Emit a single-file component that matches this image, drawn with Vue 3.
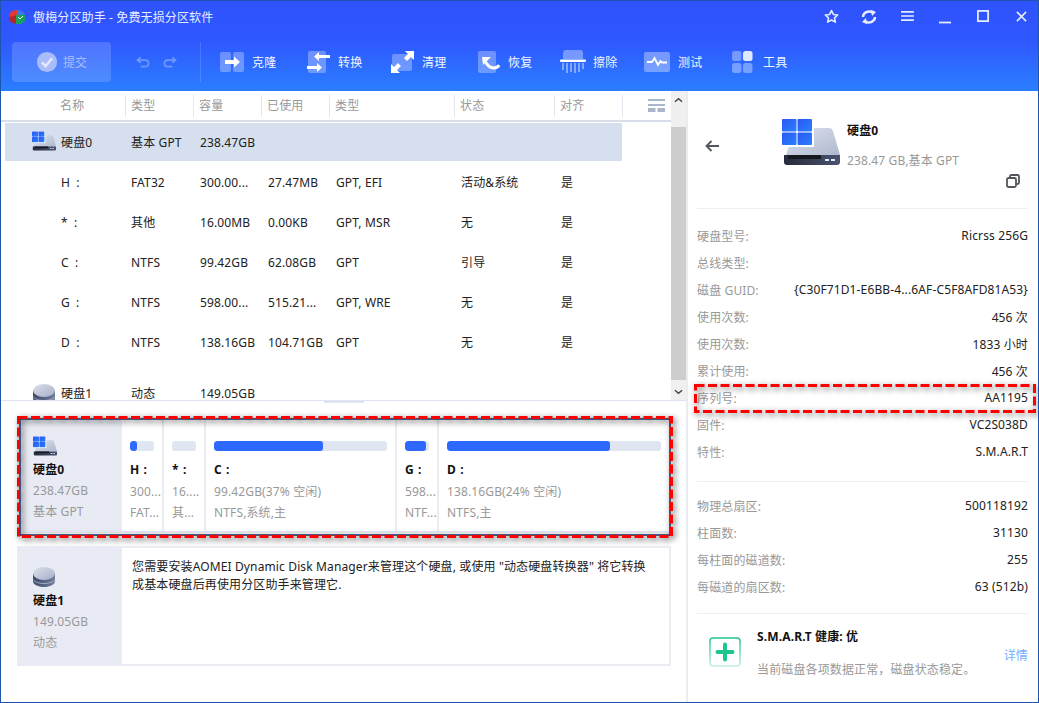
<script setup>
const tools = [
  { key: 'clone', label: '克隆' },
  { key: 'convert', label: '转换' },
  { key: 'clean', label: '清理' },
  { key: 'restore', label: '恢复' },
  { key: 'wipe', label: '擦除' },
  { key: 'test', label: '测试' },
  { key: 'tools', label: '工具' },
]

const columns = ['名称', '类型', '容量', '已使用', '类型', '状态', '对齐']

const partitions = [
  ['H :', 'FAT32', '300.00...', '27.47MB', 'GPT, EFI', '活动&系统', '是'],
  ['* :', '其他', '16.00MB', '0.00KB', 'GPT, MSR', '无', '是'],
  ['C :', 'NTFS', '99.42GB', '62.08GB', 'GPT', '引导', '是'],
  ['G :', 'NTFS', '598.00...', '515.21...', 'GPT, WRE', '无', '是'],
  ['D :', 'NTFS', '138.16GB', '104.71GB', 'GPT', '无', '是'],
]

const cells = [
  { name: 'H :', used: 30, size: '300...', info: 'FAT...' },
  { name: '* :', used: 0, size: '16....', info: '其...' },
  { name: 'C :', used: 63, size: '99.42GB(37% 空闲)', info: 'NTFS,系统,主' },
  { name: 'G :', used: 86, size: '598...', info: 'NTF...' },
  { name: 'D :', used: 76, size: '138.16GB(24% 空闲)', info: 'NTFS,主' },
]

const diskInfo = [
  ['硬盘型号:', 'Ricrss 256G'],
  ['总线类型:', ''],
  ['磁盘 GUID:', '{C30F71D1-E6BB-4...6AF-C5F8AFD81A53}'],
  ['使用次数:', '456 次'],
  ['使用次数:', '1833 小时'],
  ['累计使用:', '456 次'],
  ['序列号:', 'AA1195'],
  ['固件:', 'VC2S038D'],
  ['特性:', 'S.M.A.R.T'],
]

const geometry = [
  ['物理总扇区:', '500118192'],
  ['柱面数:', '31130'],
  ['每柱面的磁道数:', '255'],
  ['每磁道的扇区数:', '63 (512b)'],
]
</script>

<template>
  <div class="window">
    <svg class="defs" width="0" height="0" aria-hidden="true">
      <defs>
        <linearGradient id="paneBlue" x1="0" y1="0" x2="1" y2="1">
          <stop offset="0" stop-color="#2a58f2" />
          <stop offset="1" stop-color="#2b80ff" />
        </linearGradient>
        <linearGradient id="bodyGrey" x1="0" y1="0" x2="1" y2="1">
          <stop offset="0" stop-color="#dfe3ee" />
          <stop offset="1" stop-color="#aeb8ce" />
        </linearGradient>
        <linearGradient id="baseDark" x1="0" y1="0" x2="1" y2="0">
          <stop offset="0" stop-color="#262b3a" />
          <stop offset="1" stop-color="#4a5270" />
        </linearGradient>
        <linearGradient id="dbTop" x1="0" y1="0" x2="1" y2="1">
          <stop offset="0" stop-color="#dde1ec" />
          <stop offset="1" stop-color="#a6aec6" />
        </linearGradient>
        <linearGradient id="dbBase" x1="0" y1="0" x2="1" y2="0">
          <stop offset="0" stop-color="#3f4b69" />
          <stop offset="1" stop-color="#6f7c9c" />
        </linearGradient>
        <linearGradient id="greenFade" x1="0" y1="0" x2="0" y2="1">
          <stop offset="0" stop-color="#1fc68b" />
          <stop offset="1" stop-color="#c4efdf" />
        </linearGradient>
        <symbol id="disk-win" viewBox="0 0 58 46">
          <path d="M4 36 8 24H30V9H47Q50 9 51 12L58 36Z" fill="url(#bodyGrey)" />
          <path d="M2 36H58V43Q58 46 55 46H5Q2 46 2 43Z" fill="url(#baseDark)" />
          <rect x="6" y="36" width="33" height="4" rx="1" fill="#15171e" />
          <rect x="43" y="40" width="4" height="2" fill="#dfe8ff" />
          <rect x="49" y="40" width="4" height="2" fill="#dfe8ff" />
          <rect x="0" y="0" width="32" height="28" fill="#fff" />
          <rect x="0" y="0" width="14.5" height="12.5" rx="1" fill="url(#paneBlue)" />
          <rect x="15.5" y="0" width="14.5" height="12.5" rx="1" fill="url(#paneBlue)" />
          <rect x="0" y="13.5" width="14.5" height="12.5" rx="1" fill="url(#paneBlue)" />
          <rect x="15.5" y="13.5" width="14.5" height="12.5" rx="1" fill="url(#paneBlue)" />
        </symbol>
        <symbol id="disk-db" viewBox="0 0 22 20">
          <path d="M0 6V14C0 17.5 5 20 11 20S22 17.5 22 14V6Z" fill="url(#dbBase)" />
          <path d="M0 12.5C1.5 15 6 16.5 11 16.5S20.5 15 22 12.5" fill="none" stroke="#c5cbdb" stroke-width=".7" />
          <ellipse cx="11" cy="6.5" rx="11" ry="6.5" fill="url(#dbTop)" />
        </symbol>
      </defs>
    </svg>

    <header class="topbar">
      <div class="titlebar">
        <svg class="logo" viewBox="0 0 18 16" width="18" height="16" aria-hidden="true">
          <path d="M1 8C1 4 4 1 9 1V8Z" fill="#e03a32" />
          <path d="M9 1C13 1 16 3 17 6L9 8Z" fill="#3b7be0" />
          <path d="M1 8 9 6V15C5 15 1 13 1 8Z" fill="#b5262a" />
          <path d="M8 6H17V12L13 15H8Z" fill="#17a35c" />
          <path d="M10 8 12 10 15 7" fill="none" stroke="#fff" stroke-width="1" />
        </svg>
        <span class="app-title">傲梅分区助手 - 免费无损分区软件</span>
        <div class="win-btns">
          <button type="button" aria-label="收藏">
            <svg viewBox="0 0 16 16" width="15" height="15"><path d="M8 1.6 10 5.8 14.6 6.4 11.2 9.5 12.1 14 8 11.8 3.9 14 4.8 9.5 1.4 6.4 6 5.8Z" fill="none" stroke="#e6edff" stroke-width="1.7" stroke-linejoin="round" /></svg>
          </button>
          <button type="button" aria-label="刷新">
            <svg viewBox="0 0 16 16" width="16" height="16"><path d="M2 8A6 5.5 0 0 1 11.5 3.6M14 8A6 5.5 0 0 1 4.5 12.4" fill="none" stroke="#e6edff" stroke-width="2.4" /><path d="M10 .8 15 3 11 7ZM6 15.2 1 13 5 9Z" fill="#e6edff" /></svg>
          </button>
          <button type="button" aria-label="菜单">
            <svg viewBox="0 0 14 12" width="13" height="11"><path d="M0 1H14M0 5.5H14M0 10H14" stroke="#e6edff" stroke-width="1.8" /></svg>
          </button>
          <button type="button" aria-label="最小化">
            <svg viewBox="0 0 14 14" width="14" height="14"><path d="M1 12.5H13" stroke="#e6edff" stroke-width="1.8" /></svg>
          </button>
          <button type="button" aria-label="最大化">
            <svg viewBox="0 0 14 14" width="13" height="13"><rect x="1" y="1" width="11" height="11" fill="none" stroke="#e6edff" stroke-width="1.9" /></svg>
          </button>
          <button type="button" aria-label="关闭">
            <svg viewBox="0 0 12 12" width="11" height="11"><path d="M1 1 11 11M11 1 1 11" stroke="#e6edff" stroke-width="1.7" /></svg>
          </button>
        </div>
      </div>

      <div class="toolbar">
        <button class="submit" type="button">
          <svg viewBox="0 0 24 24" width="22" height="22" aria-hidden="true">
            <circle cx="12" cy="12" r="11" fill="#a9bdfb" />
            <path d="M6.5 12.5 10.5 16.5 17.5 8" fill="none" stroke="#e4eafe" stroke-width="2.6" />
          </svg>
          <span>提交</span>
        </button>
        <div class="history">
          <svg viewBox="0 0 16 14" width="15" height="13" aria-hidden="true"><path d="M5 1.5 1.5 4.5 5 7.5M2 4.5H10A3.5 3.5 0 0 1 10 11.5H5" fill="none" stroke="#6f97fb" stroke-width="1.8" /></svg>
          <svg viewBox="0 0 16 14" width="15" height="13" aria-hidden="true"><path d="M11 1.5 14.5 4.5 11 7.5M14 4.5H6A3.5 3.5 0 0 0 6 11.5H11" fill="none" stroke="#6f97fb" stroke-width="1.8" /></svg>
        </div>
        <div class="tools">
          <div v-for="tool in tools" :key="tool.key" class="tool" :class="'tool--' + tool.key">
            <svg class="tool-icon" viewBox="0 0 26 24" width="26" height="24" aria-hidden="true">
              <template v-if="tool.key === 'clone'">
                <rect x="0" y="2" width="11" height="20" rx="2" fill="#fff" fill-opacity=".3" />
                <rect x="13" y="2" width="11" height="20" rx="2" fill="#fff" fill-opacity=".3" />
                <path d="M5 10H14V6.5L20 12 14 17.500V14H5Z" fill="#fff" />
              </template>
              <template v-else-if="tool.key === 'convert'">
                <rect x="1" y="1" width="18" height="22" rx="2" fill="#fff" fill-opacity=".3" />
                <path d="M23 5H12V2L7 6.500 12 11V8H23Z" fill="#fff" />
                <path d="M0 16H10V13L15 17.500 10 22V19H0Z" fill="#fff" />
              </template>
              <template v-else-if="tool.key === 'clean'">
                <rect x="1" y="4" width="20" height="17" rx="2" fill="#fff" fill-opacity=".3" />
                <path d="M14 1H23V10L20 7 16 11 13 8 17 4ZM0 14 3 17 7 13 10 16 6 20 9 23H0Z" fill="#fff" />
              </template>
              <template v-else-if="tool.key === 'restore'">
                <rect x="0" y="1" width="18" height="22" rx="2" fill="#fff" fill-opacity=".3" />
                <path d="M7 11C9 15 12 18 16 18 18.500 18 20 17 21 15" fill="none" stroke="#fff" stroke-width="3" />
                <path d="M4 7H13L5 15Z" fill="#fff" />
              </template>
              <template v-else-if="tool.key === 'wipe'">
                <path d="M3 9V3Q3 0 6 0H20Q23 0 23 3V9Z" fill="#fff" fill-opacity=".35" />
                <rect x="0" y="9.500" width="26" height="2.500" rx="1" fill="#fff" />
                <path d="M3 13V20M7 13V23M11 13V22M15 13V23M19 13V22M23 13V19" stroke="#fff" stroke-opacity=".45" stroke-width="1.800" />
              </template>
              <template v-else-if="tool.key === 'test'">
                <rect x="0" y="2" width="26" height="20" rx="2" fill="#fff" fill-opacity=".35" />
                <path d="M3 12H8L10.500 8 14 15 16.500 11 18 12.500H23" fill="none" stroke="#fff" stroke-width="1.800" />
              </template>
              <template v-else>
                <rect x="0" y="1" width="9.500" height="10" rx="2.500" fill="#fff" fill-opacity=".35" />
                <rect x="11" y="1" width="9.500" height="10" rx="2.500" fill="#dfe9ff" />
                <rect x="0" y="13" width="9.500" height="10" rx="2.500" fill="#fff" fill-opacity=".35" />
                <rect x="11" y="13" width="9.500" height="10" rx="2.500" fill="#fff" fill-opacity=".35" />
              </template>
            </svg>
            <span>{{ tool.label }}</span>
          </div>
        </div>
      </div>
    </header>

    <div class="main">
      <section class="left">
        <div class="list-pane">
          <div class="list">
            <div class="list-head">
              <span v-for="(col, i) in columns" :key="i" class="head-cell">{{ col }}</span>
              <span class="head-cell head-menu">
                <svg viewBox="0 0 17 14" width="17" height="14" aria-hidden="true">
                  <path d="M0 1H17M0 6H17" stroke="#a9b5c9" stroke-width="2" />
                  <path d="M0 11H7.500M9.500 11H17" stroke="#a9b5c9" stroke-width="4" />
                </svg>
              </span>
            </div>
            <div class="row row--disk row--active">
              <span class="name-cell">
                <svg class="row-icon" width="24" height="20"><use href="#disk-win" /></svg>硬盘0
              </span>
              <span>基本 GPT</span>
              <span>238.47GB</span>
            </div>
            <div v-for="part in partitions" :key="part[0]" class="row">
              <span class="name-cell">{{ part[0] }}</span>
              <span v-for="(val, i) in part.slice(1)" :key="i">{{ val }}</span>
            </div>
            <div class="row row--disk row--second">
              <span class="name-cell">
                <svg class="row-icon row-icon--db" width="22" height="20"><use href="#disk-db" /></svg>硬盘1
              </span>
              <span>动态</span>
              <span>149.05GB</span>
            </div>
          </div>
          <div class="scrollbar">
            <svg viewBox="0 0 10 6" width="9" height="6" aria-hidden="true"><path d="M1 5 5 1.500 9 5" fill="none" stroke="#444" stroke-width="1.600" /></svg>
            <div class="thumb"></div>
            <svg viewBox="0 0 10 6" width="9" height="6" aria-hidden="true"><path d="M1 1 5 4.500 9 1" fill="none" stroke="#444" stroke-width="1.600" /></svg>
          </div>
        </div>
        <div class="splitter"><i></i></div>

        <div class="cards">
          <div class="card card--marked">
            <div class="card-side">
              <svg width="24" height="20"><use href="#disk-win" /></svg>
              <b>硬盘0</b>
              <span>238.47GB</span>
              <span>基本 GPT</span>
            </div>
            <div class="card-parts">
              <div v-for="cell in cells" :key="cell.name" class="part">
                <div class="bar"><div class="bar-fill" :style="{ width: cell.used + '%' }"></div></div>
                <b>{{ cell.name }}</b>
                <span>{{ cell.size }}</span>
                <span>{{ cell.info }}</span>
              </div>
            </div>
            <svg class="mark mark--card" viewBox="0 0 660 126" width="660" height="126" aria-hidden="true">
              <rect x="4" y="4" width="650" height="116" fill="none" stroke="#1d2b5c" stroke-width="1.500" />
              <rect x="2.500" y="2.500" width="653" height="119" fill="none" stroke="#f00" stroke-width="3" stroke-dasharray="9 3.500" />
            </svg>
          </div>
          <div class="card">
            <div class="card-side card-side--db">
              <svg width="22" height="20"><use href="#disk-db" /></svg>
              <b>硬盘1</b>
              <span>149.05GB</span>
              <span>动态</span>
            </div>
            <p class="card-note">您需要安装AOMEI Dynamic Disk Manager来管理这个硬盘, 或使用 "动态硬盘转换器" 将它转换成基本硬盘后再使用分区助手来管理它.</p>
          </div>
        </div>
      </section>

      <aside class="detail">
        <div class="detail-head">
          <svg class="back" viewBox="0 0 14 12" width="14" height="12" aria-hidden="true"><path d="M6.500 1 1.500 6 6.500 11M2 6H14" fill="none" stroke="#50555f" stroke-width="1.800" /></svg>
          <svg class="detail-icon" width="58" height="46"><use href="#disk-win" /></svg>
          <div class="detail-title">
            <b>硬盘0</b>
            <span>238.47 GB,基本 GPT</span>
          </div>
          <svg class="copy" viewBox="0 0 14 14" width="14" height="14" aria-hidden="true">
            <rect x="1" y="4" width="9" height="9" rx="1.500" fill="none" stroke="#50555f" stroke-width="1.800" />
            <path d="M4 3.500V2.500Q4 1 5.500 1H11.500Q13 1 13 2.500V8.500Q13 10 11.500 10H10.500" fill="none" stroke="#50555f" stroke-width="1.800" />
          </svg>
        </div>
        <dl class="info info--first">
          <div v-for="(item, i) in diskInfo" :key="i" class="info-row">
            <dt>{{ item[0] }}</dt>
            <dd>{{ item[1] }}</dd>
          </div>
        </dl>
        <dl class="info info--second">
          <div v-for="item in geometry" :key="item[0]" class="info-row">
            <dt>{{ item[0] }}</dt>
            <dd>{{ item[1] }}</dd>
          </div>
        </dl>
        <div class="smart">
          <svg class="smart-icon" viewBox="0 0 32 30" width="32" height="30" aria-hidden="true">
            <rect x="1" y="1" width="30" height="28" rx="3" fill="none" stroke="url(#greenFade)" stroke-width="1.500" />
            <path d="M16 7.500V22.500M8.500 15H23.500" stroke="#1fc68b" stroke-width="4" stroke-linecap="round" />
          </svg>
          <div class="smart-text">
            <b>S.M.A.R.T 健康: 优</b>
            <span>当前磁盘各项数据正常，磁盘状态稳定。</span>
          </div>
          <a class="smart-link">详情</a>
        </div>
        <svg class="mark mark--row" viewBox="0 0 346 32" width="346" height="32" aria-hidden="true">
          <rect x="2.500" y="2.500" width="339" height="26" fill="none" stroke="#f00" stroke-width="3" stroke-dasharray="9 3.500" />
        </svg>
      </aside>
    </div>
  </div>
</template>

<style scoped>
.window {
  position: relative;
  width: 1039px;
  height: 703px;
  box-sizing: border-box;
  border: 1px solid #1b55ae;
  border-top: none;
  background: #fff;
  display: flex;
  flex-direction: column;
  overflow: hidden;
  font-family: "Noto Sans", "Noto Sans CJK SC", sans-serif;
  font-size: 12px;
  letter-spacing: 0.13px;
  color: #222;
}

.defs {
  position: absolute;
}

.topbar {
  height: 91px;
  flex: none;
  margin: 0 -1px;
  padding: 0 1px;
  background: linear-gradient(180deg, #2f52fd 0%, #2f58ff 45%, #2b7eff 100%);
  border-top: 1px solid #1b55ae;
  box-sizing: border-box;
  color: #eaf0ff;
}

.titlebar {
  height: 31px;
  display: flex;
  align-items: center;
  padding-left: 7px;
}

.logo {
  flex: none;
}

.app-title {
  margin-left: 7px;
  color: #e6edff;
}

.win-btns {
  margin-left: auto;
  margin-right: -2px;
  display: flex;
}

.win-btns button {
  width: 38px;
  height: 31px;
  border: none;
  padding: 0;
  background: none;
  display: flex;
  align-items: center;
  justify-content: center;
}

.toolbar {
  height: 59px;
  display: flex;
  align-items: flex-start;
  padding: 10px 0 0 11px;
  box-sizing: border-box;
}

.submit {
  width: 99px;
  height: 40px;
  border: none;
  border-radius: 4px;
  background: rgba(255, 255, 255, 0.16);
  display: flex;
  align-items: center;
  justify-content: center;
  gap: 5px;
  padding: 0;
  font: inherit;
  color: #a9bdfb;
}

.history {
  width: 90px;
  height: 40px;
  display: flex;
  align-items: center;
  gap: 11px;
  padding-left: 25px;
  box-sizing: border-box;
  border-right: 1px solid rgba(255, 255, 255, 0.14);
}

.tools {
  margin-left: 19px;
  display: grid;
  grid-template-columns: 87px 84px 87px 82px 84px 88px auto;
  height: 40px;
}

.tool {
  display: flex;
  align-items: center;
  gap: 6px;
  color: #f2f6ff;
}

.tool--convert,
.tool--clean,
.tool--tools {
  gap: 5px;
}

.tool--restore {
  gap: 4px;
}

.tool--wipe {
  gap: 7px;
}

.tool--test {
  gap: 8px;
}

.tool-icon {
  flex: none;
}

.main {
  flex: 1;
  min-height: 0;
  display: flex;
}

.left {
  width: 687px;
  flex: none;
  display: flex;
  flex-direction: column;
  border-right: 2px solid #e9ecf3;
  box-sizing: border-box;
}

.list-pane {
  height: 309px;
  flex: none;
  display: flex;
  overflow: hidden;
}

.list {
  flex: 1;
  min-width: 0;
}

.list-head,
.row {
  display: grid;
  grid-template-columns: 124px 68px 68px 68px 125px 100px 68px 1fr;
  align-items: center;
}

.list-head {
  height: 29px;
  border-bottom: 2px solid #d8dfeb;
  color: #999;
  margin-bottom: 1px;
}

.head-cell {
  height: 22px;
  line-height: 22px;
  padding-left: 5px;
  border-left: 1px solid #e3e7ef;
}

.head-cell:first-child {
  padding-left: 59px;
  border-left: none;
}

.head-menu {
  display: flex;
  align-items: center;
  justify-content: flex-end;
  padding-right: 6px;
}

.row {
  height: 40px;
  color: #222;
}

.row > span {
  padding-left: 6px;
  white-space: nowrap;
}

.row > span + span + span {
  padding-left: 7px;
}

.row > span.name-cell {
  padding-left: 60px;
  position: relative;
  word-spacing: 3px;
}

.row--disk {
  height: 38px;
  margin-left: 4px;
  margin-bottom: 1px;
  margin-right: 49px;
  grid-template-columns: 120px 68px 68px 68px 125px 100px 68px;
}

.row--disk > span.name-cell {
  padding-left: 56px;
  display: flex;
  align-items: center;
}

.row--active {
  background: #d5dfee;
}

/* only the top of this row shows above the splitter */
.row--second {
  height: 25px;
  margin-top: 13px;
  margin-bottom: 0;
  align-items: end;
  line-height: 12px;
}

.row-icon {
  position: absolute;
  left: 27px;
  top: -2px;
}

.row-icon--db {
  left: 28px;
  top: -4px;
}

.scrollbar {
  width: 15px;
  flex: none;
  background: #f0f0f0;
  display: flex;
  flex-direction: column;
  align-items: center;
  justify-content: space-between;
  padding-top: 6px;
  box-sizing: border-box;
}

.thumb {
  width: 100%;
  height: 253px;
  margin-top: 15px;
  background: #cdcdcd;
}

.scrollbar svg:last-child {
  margin-bottom: 5px;
}

.splitter {
  height: 3px;
  flex: none;
  border-top: 1px solid #dfe5f0;
  box-sizing: border-box;
}

.splitter i {
  display: block;
  width: 40px;
  height: 2px;
  margin-left: 323px;
  background: #dfe5f0;
}

.cards {
  padding: 14px 15px 0 16px;
  display: flex;
  flex-direction: column;
  gap: 13px;
}

.card {
  position: relative;
  display: flex;
  border: 2px solid #e9ecf3;
  border-left: none;
  height: 116px;
  box-sizing: border-box;
}

.card + .card {
  height: 120px;
}

.card-side {
  width: 105px;
  flex: none;
  margin-top: -2px;
  margin-bottom: -2px;
  background: #e8ebf3;
  display: flex;
  flex-direction: column;
  align-items: flex-start;
  padding: 19px 0 0 16px;
  box-sizing: border-box;
  color: #999;
  line-height: 21px;
}

.card-side--db {
  padding-top: 21px;
}

.card-side svg {
  flex: none;
  margin-bottom: 3px;
}

.card-side b,
.part b {
  color: #111;
  font-weight: 700;
}

.part b {
  word-spacing: 1px;
}

.card-side span {
  white-space: nowrap;
}

.card-parts {
  flex: 1;
  min-width: 0;
  display: grid;
  grid-template-columns: 40px 42px 191px 42px 1fr;
}

.part {
  padding: 22px 8px 0;
  border-left: 2px solid #e9ecf3;
  box-sizing: border-box;
  display: flex;
  flex-direction: column;
  color: #999;
  line-height: 21.5px;
  white-space: nowrap;
  min-width: 0;
}

.part:first-child {
  border-left: none;
}

.bar {
  height: 10px;
  flex: none;
  margin-bottom: 8px;
  border-radius: 3px;
  background: #dfe5f1;
  overflow: hidden;
}

.bar-fill {
  height: 100%;
  border-radius: 3px;
  background: #2d69ff;
}

.card-note {
  margin: 10px 14px 0 10px;
  line-height: 18px;
  color: #222;
}

.mark {
  position: absolute;
  pointer-events: none;
  filter: drop-shadow(2px 2px 3px rgba(0, 0, 0, 0.6));
}

.mark--card {
  left: -1px;
  top: -4px;
}

.mark--row {
  left: 5px;
  top: 292px;
}

.detail {
  flex: 1;
  min-width: 0;
  position: relative;
  padding: 0 10px 0 9px;
  box-sizing: border-box;
}

.detail-head {
  height: 118px;
  position: relative;
  border-bottom: 1px solid #eceef4;
  box-sizing: border-box;
  display: flex;
  align-items: flex-start;
  padding: 28px 0 0 85px;
}

.back {
  position: absolute;
  left: 8px;
  top: 49px;
}

.detail-icon {
  flex: none;
}

.detail-title {
  margin-left: 7px;
  margin-top: 3px;
  display: flex;
  flex-direction: column;
  gap: 13px;
  line-height: 17px;
}

.detail-title b {
  color: #111;
}

.detail-title span {
  color: #999;
}

.copy {
  position: absolute;
  right: 8px;
  top: 83px;
}

.info {
  margin: 0;
  border-bottom: 1px solid #eceef4;
}

.info--first {
  padding: 13px 0 16px;
}

.info--second {
  padding: 10px 0 13px;
}

.info-row {
  height: 27px;
  display: flex;
  justify-content: space-between;
  align-items: center;
}

.info-row dt {
  color: #999;
}

.info-row dd {
  margin: 0;
  color: #222;
}

.smart {
  display: flex;
  position: relative;
  padding: 23px 0 0 12px;
}

.smart-icon {
  flex: none;
}

.smart-text {
  margin-left: 16px;
  margin-top: -9px;
  display: flex;
  flex-direction: column;
  gap: 16px;
  line-height: 17px;
}

.smart-text b {
  color: #111;
}

.smart-text span {
  color: #999;
}

.smart-link {
  position: absolute;
  right: 0;
  top: 32px;
  color: #75acff;
}
</style>
